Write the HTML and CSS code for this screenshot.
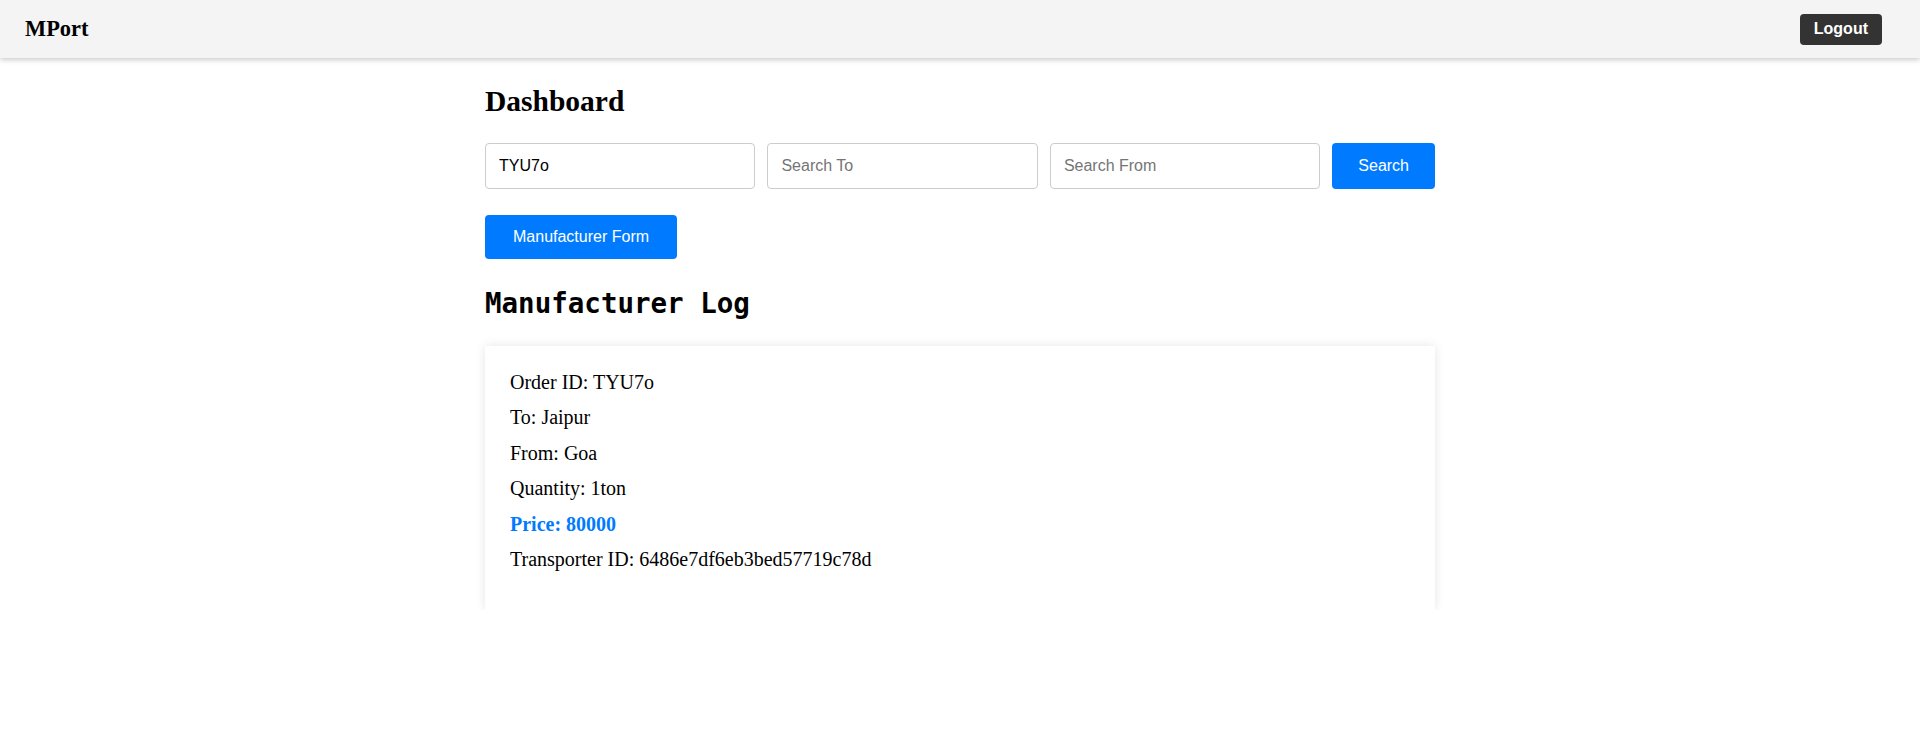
FILE: index.html
```html
<!DOCTYPE html>
<html lang="en">
<head>
<meta charset="utf-8">
<title>MPort</title>
<link rel="stylesheet" href="styles.css">
</head>
<body>
<nav class="navbar">
  <span class="brand">MPort</span>
  <button class="logout">Logout</button>
</nav>
<main class="container">
  <h2 class="title">Dashboard</h2>
  <div class="search-row">
    <input class="search-input" type="text" value="TYU7o">
    <input class="search-input" type="text" placeholder="Search To">
    <input class="search-input" type="text" placeholder="Search From">
    <button class="btn btn-search">Search</button>
  </div>
  <button class="btn btn-form">Manufacturer Form</button>
  <h2 class="log-title">Manufacturer Log</h2>
  <div class="card">
    <p>Order ID: TYU7o</p>
    <p>To: Jaipur</p>
    <p>From: Goa</p>
    <p>Quantity: 1ton</p>
    <p class="price">Price: 80000</p>
    <p>Transporter ID: 6486e7df6eb3bed57719c78d</p>
  </div>
</main>
</body>
</html>
```

FILE: styles.css
```css
* { box-sizing: border-box; }

body {
  margin: 0;
  font-family: "Liberation Serif", "Times New Roman", serif;
  background: #ffffff;
  color: #000;
}

.navbar {
  height: 58px;
  background: #f4f4f4;
  display: flex;
  align-items: center;
  justify-content: space-between;
  padding: 0 38px 0 25px;
  box-shadow: 0 2px 5px rgba(0, 0, 0, 0.2);
}

.brand {
  font-family: "Liberation Serif", serif;
  font-weight: bold;
  font-size: 22.4px;
}

.logout {
  font-family: "Liberation Sans", Arial, sans-serif;
  font-weight: bold;
  font-size: 16px;
  color: #fff;
  background: #333;
  border: none;
  border-radius: 4px;
  height: 31px;
  padding: 0 14px;
}

.container {
  width: 950px;
  margin: 0 auto;
}

.title {
  font-family: "Liberation Serif", serif;
  font-size: 29.5px;
  font-weight: bold;
  margin: 26px 0 25px;
  line-height: 34px;
}

.search-row {
  display: flex;
  gap: 12px;
  margin-bottom: 26px;
}

.search-input {
  flex: 1;
  min-width: 0;
  height: 46px;
  border: 1px solid #ccc;
  border-radius: 4px;
  padding: 0 13px;
  font-family: "Liberation Sans", Arial, sans-serif;
  font-size: 16px;
  color: #000;
}

.search-input::placeholder {
  color: #757575;
}

.btn {
  font-family: "Liberation Sans", Arial, sans-serif;
  font-size: 16px;
  color: #fff;
  background: #007bff;
  border: none;
  border-radius: 4px;
}

.btn-search {
  height: 46px;
  padding: 0 26px;
}

.btn-form {
  display: block;
  height: 44px;
  padding: 0 28px;
}

.log-title {
  font-family: "DejaVu Sans Mono", Consolas, monospace;
  font-weight: bold;
  font-size: 27.5px;
  line-height: 33px;
  margin: 28px 0 26px;
}

.card {
  background: #fff;
  box-shadow: 0 0 10px rgba(0, 0, 0, 0.1);
  padding: 19px 25px 33px;
}

.card p {
  margin: 0;
  font-size: 20px;
  line-height: 35.4px;
}

.card .price {
  color: #007bff;
  font-weight: bold;
}
```
